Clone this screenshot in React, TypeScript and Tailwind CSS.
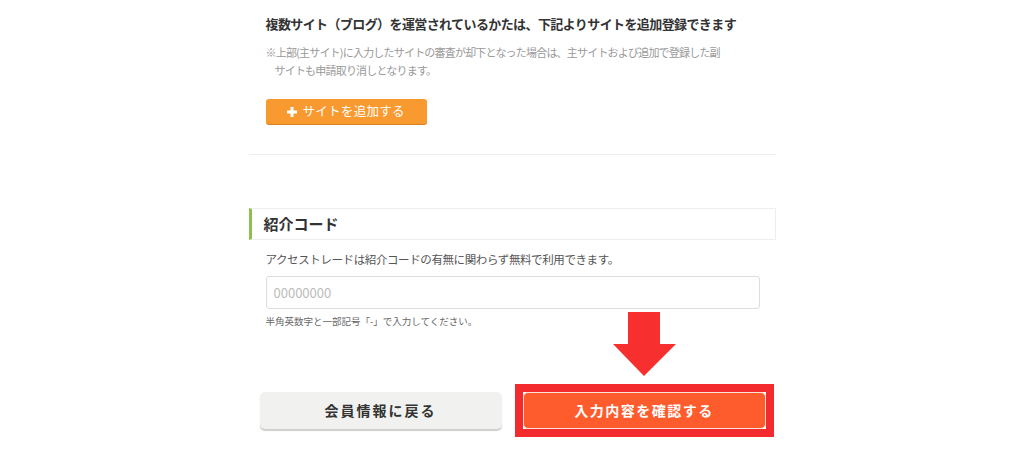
export default function App() {
  return (
    <main
      className="min-h-screen bg-white"
      style={{ fontFamily: '"Noto Sans CJK JP", "Noto Sans", sans-serif' }}
    >
      <div className="mx-auto w-[527px] pt-[14px]">
        <div className="px-[17px]">
          <h2 className="whitespace-nowrap text-[13px] font-bold leading-[20px] tracking-[-0.6px] text-[#333]">
            複数サイト（ブログ）を運営されているかたは、下記よりサイトを追加登録できます
          </h2>
          <p className="mt-[9px] pl-[9px] -indent-[9px] text-[11px] leading-[18px] tracking-[-0.8px] text-[#999]">
            ※上部(主サイト)に入力したサイトの審査が却下となった場合は、主サイトおよび追加で登録した副
            <br />
            サイトも申請取り消しとなります。
          </p>
          <button className="mt-[20px] flex h-[25px] w-[161px] items-center gap-[6px] rounded-[3px] bg-[#f99a30] pl-[21px] text-[12.5px] tracking-[0.3px] text-white shadow-[0_1px_0_#d9801f]">
            <svg width="10" height="10" viewBox="0 0 10 10" fill="white">
              <rect x="3.5" y="0" width="3" height="10" />
              <rect x="0" y="3.5" width="10" height="3" />
            </svg>
            サイトを追加する
          </button>
        </div>

        <div className="mt-[30px] h-px bg-[#eeeeee]" />

        <div className="mt-[53px] flex h-[32px] items-center border border-l-[3px] border-[#eeeeee] border-l-[#8cc152] pl-[12px]">
          <h3 className="text-[15px] font-bold text-[#333]">紹介コード</h3>
        </div>

        <div className="px-[17px]">
          <p className="mt-[10px] text-[11.5px] leading-[18px] tracking-[-0.4px] text-[#555]">
            アクセストレードは紹介コードの有無に関わらず無料で利用できます。
          </p>
          <input
            type="text"
            placeholder="00000000"
            className="mt-[8px] h-[33px] w-[494px] rounded-[3px] border border-[#dddddd] px-[7px] text-[13px] text-[#333] outline-none placeholder:text-[#bbbbbb]"
          />
          <p className="mt-[5px] text-[9.5px] leading-[14px] text-[#666]">
            半角英数字と一部記号「-」で入力してください。
          </p>
        </div>

        <div className="relative mt-[56px] flex items-center justify-between pl-[11px] pr-[2px]">
          <svg
            className="absolute left-[364px] top-[-72px]"
            width="64"
            height="65"
            viewBox="0 0 64 65"
          >
            <polygon
              points="15,0 47,0 47,32 63,32 31,64 0,32 15,32"
              fill="#f7302f"
            />
          </svg>
          <button className="h-[37px] w-[242px] rounded-[5px] bg-[#f1f1ef] text-[14px] font-bold tracking-[2px] text-[#333] shadow-[0_2px_1px_#cfcfcf]">
            会員情報に戻る
          </button>
          <div className="border-[8px] border-[#f42b2e]">
            <button className="h-[37px] w-[243px] rounded-[5px] border border-[#fbe3d8] bg-[#ff5c2e] text-[14px] font-bold tracking-[1.5px] text-white">
              入力内容を確認する
            </button>
          </div>
        </div>
      </div>
    </main>
  );
}
